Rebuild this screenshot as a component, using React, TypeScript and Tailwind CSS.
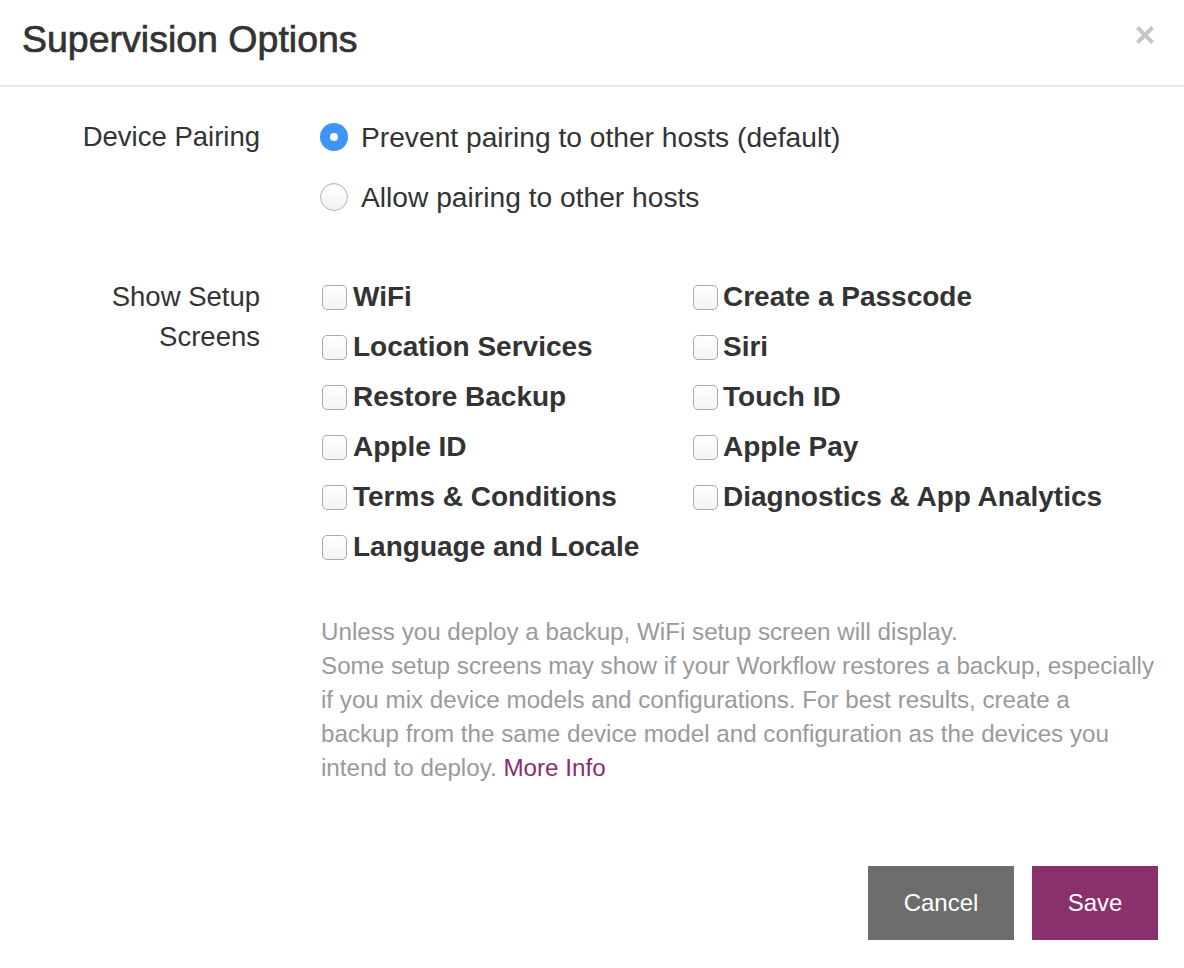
import { useState } from 'react';

const leftOptions = [
  'WiFi',
  'Location Services',
  'Restore Backup',
  'Apple ID',
  'Terms & Conditions',
  'Language and Locale',
];

const rightOptions = [
  'Create a Passcode',
  'Siri',
  'Touch ID',
  'Apple Pay',
  'Diagnostics & App Analytics',
];

const Radio = ({ checked, label, onClick }: { checked: boolean; label: string; onClick: () => void }) => (
  <button type="button" onClick={onClick} className="flex h-[40px] items-center text-left">
    {checked ? (
      <span className="flex h-[28px] w-[28px] items-center justify-center rounded-full bg-[#3f95f3]">
        <span className="h-[8px] w-[8px] rounded-full bg-white" />
      </span>
    ) : (
      <span className="h-[28px] w-[28px] rounded-full border border-[#b4b4b4] bg-gradient-to-b from-white to-[#f1f1f1] shadow-[inset_0_1px_1px_rgba(0,0,0,0.06)]" />
    )}
    <span className="ml-[13px] text-[28.2px] leading-[40px] text-[#333]">{label}</span>
  </button>
);

const Check = ({ label, gap }: { label: string; gap: string }) => {
  const [on, setOn] = useState(false);
  return (
    <button type="button" onClick={() => setOn(!on)} className="flex h-[40px] items-center text-left">
      <span className="flex h-[25px] w-[25px] items-center justify-center rounded-[5px] border-[1.5px] border-[#ababab] bg-gradient-to-b from-white to-[#f4f4f4]">
        {on && (
          <svg viewBox="0 0 16 16" className="h-[16px] w-[16px]">
            <path d="M3 8.5l3 3 7-7" fill="none" stroke="#333" strokeWidth="2" />
          </svg>
        )}
      </span>
      <span className={`${gap} text-[28px] font-bold leading-[40px] text-[#333]`}>{label}</span>
    </button>
  );
};

export default function App() {
  const [pairing, setPairing] = useState<'prevent' | 'allow'>('prevent');

  return (
    <div className="min-h-[968px] w-full bg-white font-['Liberation_Sans',Arial,sans-serif] text-[#333]">
      {/* Header */}
      <div className="flex h-[87px] items-start justify-between border-b-2 border-[#e5e5e5] pl-[22px] pr-[29px]">
        <h1 className="pt-[21px] text-[37.5px] leading-none [-webkit-text-stroke:0.7px_#333]">Supervision Options</h1>
        <button type="button" className="mt-[25px]">
          <svg viewBox="0 0 20 20" className="h-[20px] w-[20px]">
            <path d="M2.5 2.5l15 15M17.5 2.5l-15 15" stroke="#c5c5c5" strokeWidth="4.2" />
          </svg>
        </button>
      </div>

      {/* Body */}
      <div className="pt-[30px]">
        <div className="flex">
          <div className="w-[260px] text-right text-[27.5px] leading-[40px]">Device Pairing</div>
          <div className="ml-[60px] flex flex-col gap-[20px]">
            <Radio
              checked={pairing === 'prevent'}
              label="Prevent pairing to other hosts (default)"
              onClick={() => setPairing('prevent')}
            />
            <Radio
              checked={pairing === 'allow'}
              label="Allow pairing to other hosts"
              onClick={() => setPairing('allow')}
            />
          </div>
        </div>

        <div className="mt-[60px] flex">
          <div className="w-[260px] text-right text-[27.5px] leading-[40px]">
            Show Setup
            <br />
            Screens
          </div>
          <div className="ml-[62px] flex">
            <div className="flex w-[371px] flex-col gap-[10px]">
              {leftOptions.map((o) => (
                <Check key={o} label={o} gap="ml-[6px]" />
              ))}
            </div>
            <div className="flex flex-col gap-[10px]">
              {rightOptions.map((o) => (
                <Check key={o} label={o} gap="ml-[5px]" />
              ))}
            </div>
          </div>
        </div>

        <p className="ml-[321px] mt-[48px] text-[24.2px] leading-[34px] text-[#9a9a9a]">
          Unless you deploy a backup, WiFi setup screen will display.
          <br />
          Some setup screens may show if your Workflow restores a backup, especially
          <br />
          if you mix device models and configurations. For best results, create a
          <br />
          backup from the same device model and configuration as the devices you
          <br />
          intend to deploy.{' '}
          <a href="#" className="text-[#8a2d6c]">
            More Info
          </a>
        </p>

        <div className="mt-[81px] flex justify-end gap-[18px] pr-[26px]">
          <button type="button" className="h-[74px] w-[146px] bg-[#6d6d6d] text-[24px] text-white">
            Cancel
          </button>
          <button type="button" className="h-[74px] w-[126px] bg-[#8a306c] text-[24px] text-white">
            Save
          </button>
        </div>
      </div>
    </div>
  );
}
